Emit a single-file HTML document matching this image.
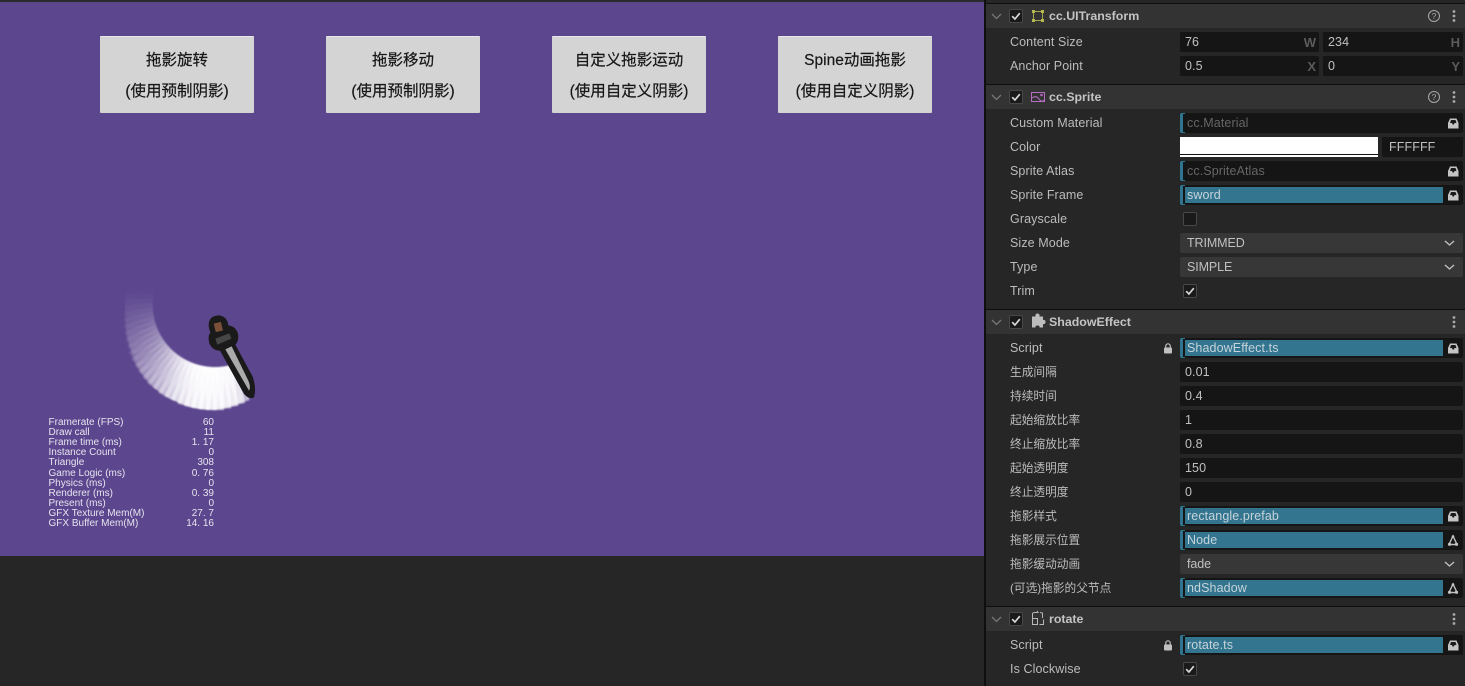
<!DOCTYPE html>
<html><head><meta charset="utf-8"><style>
html,body{margin:0;padding:0;background:#262626}
body{width:1465px;height:686px;position:relative;overflow:hidden;font-family:"Liberation Sans","Noto Sans CJK SC",sans-serif}
div,svg{position:absolute}
.btn{width:154px;height:77px;top:36px;background:#d4d4d4;border-top:1px solid #e8e6ee;box-sizing:border-box;border-radius:1px;color:#161616;font-size:15.5px;text-align:center;font-family:"Liberation Sans","Noto Sans CJK SC",sans-serif;-webkit-text-stroke:.2px #161616}
.btn div{left:0;right:0;height:20px;line-height:20px;white-space:nowrap}
.st{left:48.5px;height:10px;line-height:10px;font-size:10px;color:#e6e4ee;white-space:nowrap}
.sv{left:114px;width:100px;text-align:right;height:10px;line-height:10px;font-size:10px;color:#e6e4ee;white-space:pre}
.hd{left:986px;width:479px;height:24px;background:#333}
.ln{left:986px;width:479px;height:1px;background:#0e0e0e}
.ht{left:1049px;height:18px;line-height:18px;font-size:12.4px;font-weight:bold;color:#c4c4c4;white-space:nowrap}
.lb{left:1010px;height:18px;line-height:18px;font-size:12.5px;letter-spacing:.1px;color:#bcbcbc;white-space:nowrap}
.c{font-size:11.7px;letter-spacing:0;margin-top:1px}
.in{height:20px;background:#151515;border-radius:2px;left:1180px;width:283px;line-height:20px;font-size:12.5px;letter-spacing:.1px;color:#c0c0c0;box-sizing:border-box;padding-left:5px;white-space:nowrap}
.sel{background:#373737;padding-left:7px;letter-spacing:-.1px}
.as{padding-left:7px;color:#666}
.as::before{content:"";position:absolute;left:0;top:0;width:5px;height:20px;box-sizing:border-box;border-left:3px solid #2f7590;border-top:1px solid #2f7590;border-bottom:1px solid #2f7590;border-radius:2px 0 0 2px}
.ref{color:#c6d4da}
.bar{left:5px;top:2px;width:258px;height:16px;background:#33748f}
.tx{left:7px;top:0;line-height:20px}
.u{left:auto;right:3px;top:1px;font-size:13px;font-weight:bold;color:#5c5c5c;line-height:20px;letter-spacing:0}
</style></head><body>
<svg width="0" height="0" style="left:0;top:0">
<defs>
<g id="cb"><rect x=".5" y=".5" width="13" height="13" rx="1.5" fill="#1a1a1a" stroke="#484848"/><path d="M3.2 7.2 5.9 10 10.8 4.2" fill="none" stroke="#d8d8d8" stroke-width="1.7"/></g>
<g id="chev"><path d="M0 0 4.5 4.5 9 0" fill="none" stroke="#777" stroke-width="1.3"/></g>
<g id="chev2"><path d="M0 0 4.5 4 9 0" fill="none" stroke="#c0c0c0" stroke-width="1.4"/></g>
<g id="dots"><circle cx="2" cy="2" r="1.4" fill="#aaa"/><circle cx="2" cy="6.5" r="1.4" fill="#aaa"/><circle cx="2" cy="11" r="1.4" fill="#aaa"/></g>
<g id="help"><circle cx="6" cy="6" r="5.5" fill="none" stroke="#a8a8a8"/><text x="6" y="9" font-size="8.5" font-family="Liberation Sans" fill="#a8a8a8" text-anchor="middle">?</text></g>
<g id="box"><path d="M0 5 2 .5H8.500L10.500 5V10.500H0Z" fill="#c4c4c4"/><path d="M2 5 3 2H7.500L8.500 5H6.500L6 6.500H4.500L4 5Z" fill="#1a1a1a"/></g>
<g id="node"><path d="M5 1 1 9.500H9Z" fill="none" stroke="#c4c4c4" stroke-width="1.4"/><circle cx="5" cy="1.500" r="1.300" fill="#c4c4c4"/><circle cx="1.500" cy="9.300" r="1.600" fill="#c4c4c4"/><circle cx="8.500" cy="9.300" r="1.600" fill="#c4c4c4"/></g>
<g id="lock"><rect x="0" y="4.500" width="8" height="6" rx="1" fill="#c0c0c0"/><path d="M1.800 5V3A2.200 2.200 0 0 1 6.200 3V5" fill="none" stroke="#c0c0c0" stroke-width="1.200"/></g>
</defs></svg>

<div style="left:0;top:0;width:985px;height:686px;background:#262626"></div>
<div style="left:0;top:2px;width:985px;height:554px;background:#5c468e"></div>
<div style="left:0;top:0;width:985px;height:2px;background:#2a2a2a"></div>
<div style="left:984px;top:0;width:2px;height:686px;background:#0f0f0f"></div>

<div class="btn" style="left:100px"><div style="top:14px">拖影旋转</div><div style="top:45px">(使用预制阴影)</div></div>
<div class="btn" style="left:326px"><div style="top:14px">拖影移动</div><div style="top:45px">(使用预制阴影)</div></div>
<div class="btn" style="left:552px"><div style="top:14px">自定义拖影运动</div><div style="top:45px">(使用自定义阴影)</div></div>
<div class="btn" style="left:778px"><div style="top:14px">Spine动画拖影</div><div style="top:45px">(使用自定义阴影)</div></div>

<svg width="985" height="556" viewBox="0 0 985 556" style="left:0;top:0">
<g fill="#fff" style="filter:blur(.8px)">
<rect x="277" y="296" width="27" height="18" opacity=".01" transform="rotate(186 215 305)"/>
<rect x="277" y="296" width="28" height="18" opacity=".02" transform="rotate(182 215 305)"/>
<rect x="277" y="296" width="28" height="18" opacity=".03" transform="rotate(178 215 305)"/>
<rect x="277" y="296" width="28" height="18" opacity=".04" transform="rotate(174 215 305)"/>
<rect x="277" y="296" width="29" height="18" opacity=".05" transform="rotate(170 215 305)"/>
<rect x="277" y="296" width="30" height="18" opacity=".06" transform="rotate(166 215 305)"/>
<rect x="277" y="296" width="31" height="18" opacity=".08" transform="rotate(162 215 305)"/>
<rect x="277" y="296" width="32" height="18" opacity=".09" transform="rotate(158 215 305)"/>
<rect x="277" y="296" width="33" height="18" opacity=".11" transform="rotate(154 215 305)"/>
<rect x="277" y="296" width="34" height="18" opacity=".12" transform="rotate(150 215 305)"/>
<rect x="277" y="296" width="36" height="18" opacity=".14" transform="rotate(146 215 305)"/>
<rect x="277" y="296" width="37" height="18" opacity=".17" transform="rotate(142 215 305)"/>
<rect x="277" y="296" width="38" height="18" opacity=".2" transform="rotate(138 215 305)"/>
<rect x="277" y="296" width="39" height="18" opacity=".23" transform="rotate(134 215 305)"/>
<rect x="277" y="296" width="40" height="18" opacity=".27" transform="rotate(130 215 305)"/>
<rect x="277" y="296" width="41" height="18" opacity=".31" transform="rotate(126 215 305)"/>
<rect x="277" y="296" width="41" height="18" opacity=".37" transform="rotate(122 215 305)"/>
<rect x="277" y="296" width="42" height="18" opacity=".43" transform="rotate(118 215 305)"/>
<rect x="277" y="296" width="42" height="18" opacity=".5" transform="rotate(114 215 305)"/>
<rect x="277" y="296" width="42" height="18" opacity=".56" transform="rotate(110 215 305)"/>
<rect x="277" y="296" width="43" height="18" opacity=".62" transform="rotate(106 215 305)"/>
<rect x="277" y="296" width="43" height="18" opacity=".7" transform="rotate(102 215 305)"/>
<rect x="277" y="296" width="43" height="18" opacity=".7" transform="rotate(98 215 305)"/>
<rect x="277" y="296" width="43" height="18" opacity=".7" transform="rotate(94 215 305)"/>
<rect x="277" y="296" width="43" height="18" opacity=".7" transform="rotate(90 215 305)"/>
<rect x="277" y="296" width="42" height="18" opacity=".7" transform="rotate(86 215 305)"/>
<rect x="277" y="296" width="41" height="18" opacity=".7" transform="rotate(82 215 305)"/>
<rect x="277" y="296" width="40" height="16" opacity=".65" transform="rotate(78 215 305)"/>
<rect x="277" y="298" width="39" height="14" opacity=".6" transform="rotate(74 215 305)"/>
</g>
<g transform="translate(110 280) scale(.33333)">
<path d="M296 132Q298 108 325 106Q352 108 355 136Q382 140 385 168Q385 186 376 194L428 290Q440 325 432 352Q418 360 402 342L330 212Q308 212 298 190Q292 165 302 158Q296 148 296 132Z" fill="#1a1a1a"/>
<rect x="314" y="128" width="22" height="26" fill="#7c5038" transform="rotate(-14 325 141)"/>
<path d="M316 176 358 160 364 176 322 194Z" fill="#464646"/>
<path d="M346 208 365 199 416 304Q423 322 417 332Q390 285 346 208Z" fill="#ababab"/>
</g>
</svg>

<div class="st" style="top:418px">Framerate (FPS)</div><div class="sv" style="top:418px">60</div>
<div class="st" style="top:428px">Draw call</div><div class="sv" style="top:428px">11</div>
<div class="st" style="top:438px">Frame time (ms)</div><div class="sv" style="top:438px">1. 17</div>
<div class="st" style="top:448px">Instance Count</div><div class="sv" style="top:448px">0</div>
<div class="st" style="top:458px">Triangle</div><div class="sv" style="top:458px">308</div>
<div class="st" style="top:469px">Game Logic (ms)</div><div class="sv" style="top:469px">0. 76</div>
<div class="st" style="top:479px">Physics (ms)</div><div class="sv" style="top:479px">0</div>
<div class="st" style="top:489px">Renderer (ms)</div><div class="sv" style="top:489px">0. 39</div>
<div class="st" style="top:499px">Present (ms)</div><div class="sv" style="top:499px">0</div>
<div class="st" style="top:509px">GFX Texture Mem(M)</div><div class="sv" style="top:509px">27. 7</div>
<div class="st" style="top:519px">GFX Buffer Mem(M)</div><div class="sv" style="top:519px">14. 16</div>

<!-- Panel -->
<div class="ln" style="top:3px"></div>
<div class="hd" style="top:4px"></div>
<div class="ht" style="top:7px">cc.UITransform</div>
<div class="ln" style="top:84px"></div>
<div class="hd" style="top:85px"></div>
<div class="ht" style="top:88px">cc.Sprite</div>
<div class="ln" style="top:309px"></div>
<div class="hd" style="top:310px"></div>
<div class="ht" style="top:313px">ShadowEffect</div>
<div class="ln" style="top:606px"></div>
<div class="hd" style="top:607px"></div>
<div class="ht" style="top:610px">rotate</div>

<div class="lb" style="top:33px">Content Size</div>
<div class="in" style="top:32px;width:139px">76<div class="u">W</div></div>
<div class="in" style="top:32px;left:1323px;width:140px">234<div class="u">H</div></div>
<div class="lb" style="top:57px">Anchor Point</div>
<div class="in" style="top:56px;width:139px">0.5<div class="u">X</div></div>
<div class="in" style="top:56px;left:1323px;width:140px">0<div class="u">Y</div></div>

<div class="lb" style="top:114px">Custom Material</div>
<div class="in as" style="top:113px">cc.Material</div>
<div class="lb" style="top:138px">Color</div>
<div style="left:1180px;top:137px;width:198px;height:20px;background:#fff"></div>
<div style="left:1180px;top:154px;width:198px;height:1px;background:#111"></div>
<div class="in" style="top:137px;left:1382px;width:81px;padding-left:7px">FFFFFF</div>
<div class="lb" style="top:162px">Sprite Atlas</div>
<div class="in as" style="top:161px">cc.SpriteAtlas</div>
<div class="lb" style="top:186px">Sprite Frame</div>
<div class="in as ref" style="top:185px"><div class="bar"></div><div class="tx">sword</div></div>
<div class="lb" style="top:210px">Grayscale</div>
<div class="lb" style="top:234px">Size Mode</div>
<div class="in sel" style="top:233px">TRIMMED</div>
<div class="lb" style="top:258px">Type</div>
<div class="in sel" style="top:257px">SIMPLE</div>
<div class="lb" style="top:282px">Trim</div>

<div class="lb" style="top:339px">Script</div>
<div class="in as ref" style="top:338px"><div class="bar"></div><div class="tx">ShadowEffect.ts</div></div>
<div class="lb c" style="top:363px">生成间隔</div>
<div class="in" style="top:362px">0.01</div>
<div class="lb c" style="top:387px">持续时间</div>
<div class="in" style="top:386px">0.4</div>
<div class="lb c" style="top:411px">起始缩放比率</div>
<div class="in" style="top:410px">1</div>
<div class="lb c" style="top:435px">终止缩放比率</div>
<div class="in" style="top:434px">0.8</div>
<div class="lb c" style="top:459px">起始透明度</div>
<div class="in" style="top:458px">150</div>
<div class="lb c" style="top:483px">终止透明度</div>
<div class="in" style="top:482px">0</div>
<div class="lb c" style="top:507px">拖影样式</div>
<div class="in as ref" style="top:506px"><div class="bar"></div><div class="tx">rectangle.prefab</div></div>
<div class="lb c" style="top:531px">拖影展示位置</div>
<div class="in as ref" style="top:530px"><div class="bar"></div><div class="tx">Node</div></div>
<div class="lb c" style="top:555px">拖影缓动动画</div>
<div class="in sel" style="top:554px">fade</div>
<div class="lb c" style="top:579px">(可选)拖影的父节点</div>
<div class="in as ref" style="top:578px"><div class="bar"></div><div class="tx">ndShadow</div></div>

<div class="lb" style="top:636px">Script</div>
<div class="in as ref" style="top:635px"><div class="bar"></div><div class="tx">rotate.ts</div></div>
<div class="lb" style="top:660px">Is Clockwise</div>

<svg width="1465" height="686" viewBox="0 0 1465 686" style="left:0;top:0">
<use href="#chev" x="992" y="14"/><use href="#chev" x="992" y="95"/><use href="#chev" x="992" y="320"/><use href="#chev" x="992" y="617"/>
<use href="#cb" x="1009" y="9"/><use href="#cb" x="1009" y="90"/><use href="#cb" x="1009" y="315"/><use href="#cb" x="1009" y="612"/>
<use href="#cb" x="1183" y="284"/><use href="#cb" x="1183" y="662"/>
<rect x="1183.500" y="212.500" width="13" height="13" rx="1.500" fill="#1a1a1a" stroke="#484848"/>
<!-- component icons -->
<g><rect x="1033.500" y="11.500" width="9" height="9" fill="none" stroke="#a5a84a"/><rect x="1032" y="10" width="3" height="3" fill="#b5b84f"/><rect x="1041" y="10" width="3" height="3" fill="#b5b84f"/><rect x="1032" y="19" width="3" height="3" fill="#b5b84f"/><rect x="1041" y="19" width="3" height="3" fill="#b5b84f"/></g>
<g fill="none" stroke="#b56ec2"><rect x="1031.500" y="92.500" width="13" height="9"/><path d="M1032 98Q1036 95 1039 99T1044 100"/><circle cx="1041.500" cy="95" r=".8"/></g>
<path d="M1032 317H1035.500Q1035 314 1037.500 314T1039.500 317H1043V320.500Q1045.500 320 1045.500 322.500T1043 324.500V328H1039.500Q1040 326 1037.500 326T1035.500 328H1032Z" fill="#bdbdbd" transform="translate(0 -.500)"/>
<g fill="none" stroke="#b8b8b8"><path d="M1032.500 618V613.500Q1033 612.500 1035 612.500H1038L1037 611"/><rect x="1032.500" y="618.500" width="5" height="6"/><path d="M1042.500 618V613L1040 612.500M1039.500 624.500H1043.500V619.500"/></g>
<use href="#help" x="1428" y="10"/><use href="#help" x="1428" y="91"/>
<use href="#dots" x="1452" y="9.500"/><use href="#dots" x="1452" y="90.500"/><use href="#dots" x="1452" y="315.500"/><use href="#dots" x="1452" y="612.500"/>
<use href="#box" x="1448" y="118"/><use href="#box" x="1448" y="166"/><use href="#box" x="1448" y="190"/><use href="#box" x="1448" y="343"/><use href="#box" x="1448" y="511"/><use href="#box" x="1448" y="640"/>
<use href="#node" x="1448" y="535"/><use href="#node" x="1448" y="583"/>
<use href="#chev2" x="1445" y="241"/><use href="#chev2" x="1445" y="265"/><use href="#chev2" x="1445" y="562"/>
<use href="#lock" x="1164" y="343"/><use href="#lock" x="1164" y="640"/>
</svg>
</body></html>
